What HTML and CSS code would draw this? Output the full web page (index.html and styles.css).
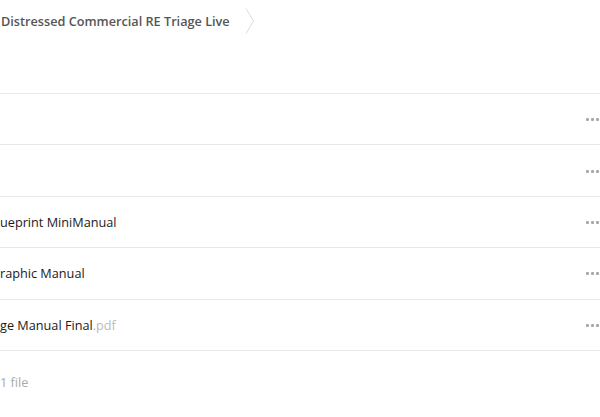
FILE: index.html
```html
<!DOCTYPE html>
<html>
<head>
<meta charset="utf-8">
<link rel="stylesheet" href="styles.css">
</head>
<body>
<div class="page">
  <header class="header">
    <nav class="crumbs">
      <span class="crumb">Distressed Commercial RE Triage Live</span>
      <svg class="chev" width="10" height="26" viewBox="0 0 10 26"><path d="M1 0.5 L8.5 13 L1 25.5" fill="none" stroke="#dcdcdc" stroke-width="1"/></svg>
    </nav>
  </header>
  <ul class="list">
    <li class="row"><span class="name"></span><span class="more"><i></i><i></i><i></i></span></li>
    <li class="row"><span class="name"></span><span class="more"><i></i><i></i><i></i></span></li>
    <li class="row"><span class="name">ueprint MiniManual</span><span class="more"><i></i><i></i><i></i></span></li>
    <li class="row"><span class="name">raphic Manual</span><span class="more"><i></i><i></i><i></i></span></li>
    <li class="row"><span class="name">ge Manual Final<span class="ext">.pdf</span></span><span class="more"><i></i><i></i><i></i></span></li>
  </ul>
  <footer class="footer">1 file</footer>
</div>
</body>
</html>
```

FILE: styles.css
```css
html, body {
  margin: 0;
  padding: 0;
  background: #fff;
}
body {
  font-family: "Open Sans", "Noto Sans", sans-serif;
  color: #222;
  overflow: hidden;
}
.page {
  width: 600px;
}
.header {
  height: 93px;
  box-sizing: border-box;
}
.crumbs {
  display: flex;
  align-items: center;
  height: 42px;
  gap: 15px;
}
.crumb {
  font-size: 12.7px;
  font-weight: 600;
  color: #555;
  padding-left: 1px;
}
.chev {
  display: block;
}
.list {
  list-style: none;
  margin: 0;
  padding: 0;
  border-bottom: 1px solid #e8e8e8;
}
.row {
  display: flex;
  align-items: center;
  justify-content: space-between;
  height: 50.4px;
  border-top: 1px solid #e8e8e8;
}
.name {
  font-size: 12.7px;
  color: #1a1a1a;
}
.ext {
  color: #bbb;
}
.more {
  display: flex;
  gap: 2px;
  padding-right: 1px;
  margin-top: 1px;
}
.more i {
  display: block;
  width: 3px;
  height: 3px;
  background: #a8a8a8;
  border-radius: 1px;
}
.footer {
  height: 62px;
  display: flex;
  align-items: center;
  font-size: 12.7px;
  color: #aaa;
}
```
